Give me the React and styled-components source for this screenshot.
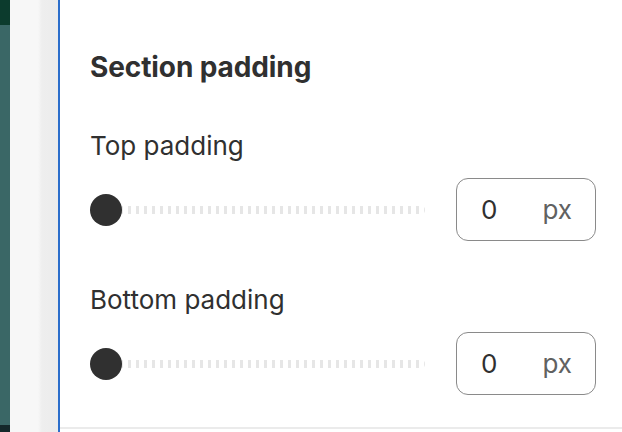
import React from 'react';
import styled, { createGlobalStyle } from 'styled-components';

const GlobalStyle = createGlobalStyle`
  html, body {
    margin: 0;
    padding: 0;
    background: #ffffff;
    font-family: Inter, "Noto Sans", sans-serif;
    color: #303030;
  }
`;

const rows = [
  { id: 'top', label: 'Top padding', value: 0 },
  { id: 'bottom', label: 'Bottom padding', value: 0 },
];

const App = () => {
  return (
    <>
      <GlobalStyle />
      <Frame>
        <Rail>
          <RailTop />
          <RailMid />
          <RailBottom />
        </Rail>
        <Gutter />
        <Panel>
          <Heading>Section padding</Heading>
          {rows.map((row) => (
            <Field key={row.id}>
              <Label>{row.label}</Label>
              <Row>
                <Slider>
                  <Track />
                  <Thumb />
                </Slider>
                <NumberBox>
                  <Value>{row.value}</Value>
                  <Unit>px</Unit>
                </NumberBox>
              </Row>
            </Field>
          ))}
        </Panel>
      </Frame>
    </>
  );
};

const Frame = styled.div`
  display: flex;
  width: 622px;
  height: 432px;
  overflow: hidden;
`;

const Rail = styled.div`
  width: 10px;
  display: flex;
  flex-direction: column;
`;

const RailTop = styled.div`
  height: 25px;
  background: #0c3b2d;
`;

const RailMid = styled.div`
  flex: 1;
  background: #3a6766;
`;

const RailBottom = styled.div`
  height: 7px;
  background: #14282a;
`;

const Gutter = styled.div`
  width: 48px;
  background: linear-gradient(to right, #f7f7f7 0, #f7f7f7 28px, #eeeeee 32px, #ececec 48px);
  border-right: 2px solid #2c6ecb;
`;

const Panel = styled.div`
  flex: 1;
  padding: 49px 26px 0 30px;
  border-bottom: 2px solid #ebebeb;
  margin-bottom: 3px;
`;

const Heading = styled.h2`
  margin: 0 0 45px;
  font-size: 28px;
  line-height: 36px;
  font-weight: 650;
  letter-spacing: -0.1px;
`;

const Field = styled.div`
  margin-bottom: 43px;
`;

const Label = styled.div`
  font-size: 26px;
  line-height: 32px;
  font-weight: 400;
  margin-bottom: 16px;
`;

const Row = styled.div`
  display: flex;
  align-items: center;
  gap: 31px;
`;

const Slider = styled.div`
  position: relative;
  flex: 1;
  height: 32px;
  display: flex;
  align-items: center;
`;

const Track = styled.div`
  margin-left: 30px;
  flex: 1;
  height: 8px;
  border-radius: 4px;
  background: repeating-linear-gradient(
    to right,
    #e6e6e6 0,
    #e6e6e6 3px,
    transparent 3px,
    transparent 8px
  );
`;

const Thumb = styled.div`
  position: absolute;
  left: 0;
  top: 0;
  width: 32px;
  height: 32px;
  border-radius: 50%;
  background: #303030;
`;

const NumberBox = styled.div`
  box-sizing: border-box;
  width: 140px;
  height: 63px;
  border: 1px solid #8a8a8a;
  border-radius: 12px;
  display: flex;
  align-items: center;
  justify-content: space-between;
  padding: 0 23px 0 24px;
  font-size: 26px;
`;

const Value = styled.span`
  color: #303030;
`;

const Unit = styled.span`
  color: #616161;
`;

export default App;
